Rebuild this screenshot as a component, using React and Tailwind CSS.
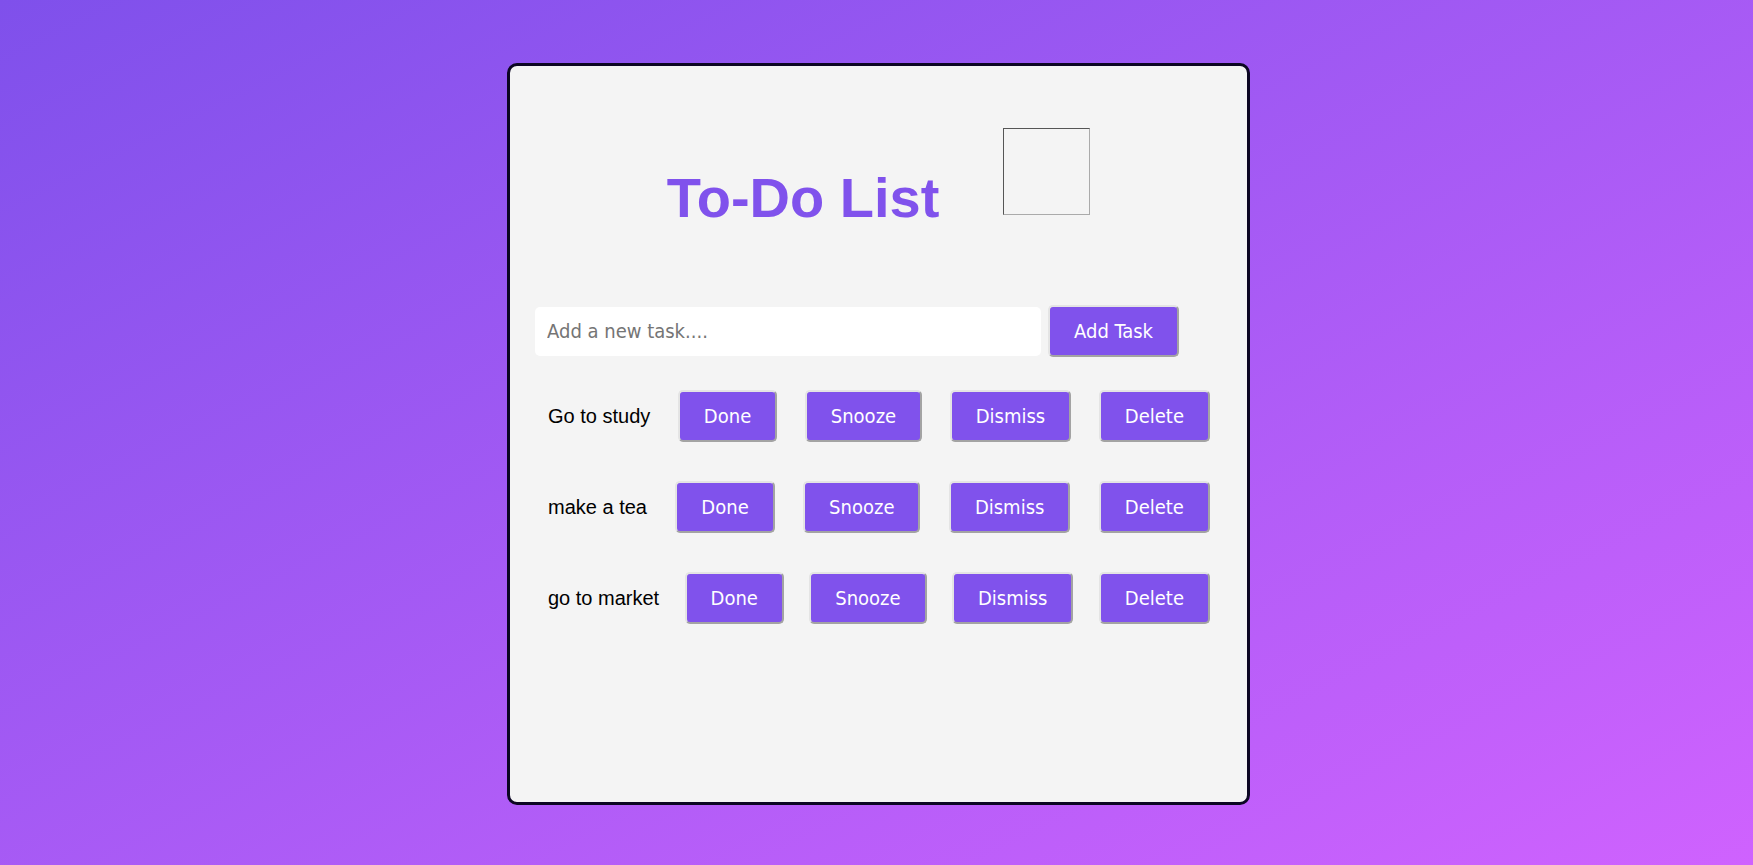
import React, { useState } from 'react';

const initialTasks = ['Go to study', 'make a tea', 'go to market'];

const btn =
    "bg-[#8052ec] text-white text-[20px] leading-[24px] px-6 py-3 rounded-[5px] border-2 border-t-[#e4e4e4] border-l-[#e4e4e4] border-r-[#a3a3a3] border-b-[#a3a3a3] font-['DejaVu_Sans',sans-serif] [font-stretch:condensed]";

const TaskRow = ({ text }) => (
    <li className="flex items-center justify-between w-[662px] ml-[38px]">
        <span className="text-[20px] text-black font-['Liberation_Sans',Arial,sans-serif]">{text}</span>
        <button className={btn}>Done</button>
        <button className={btn}>Snooze</button>
        <button className={btn}>Dismiss</button>
        <button className={btn}>Delete</button>
    </li>
);

export default function App() {
    const [tasks] = useState(initialTasks);

    return (
        <div className="min-h-screen w-full flex items-center justify-center bg-linear-to-br from-[#7f50eb] to-[#cf62fe]">
            <div className="ml-[4px] mt-[3px] w-[743px] h-[742px] bg-[#f4f4f4] border-[3px] border-[#0c0623] rounded-[10px] flex flex-col">
                {/* Header */}
                <div className="flex justify-center items-start gap-[64px] pt-[62px]">
                    <h1 className="mt-[38px] text-[56px] leading-[64px] font-bold text-[#8052ec] font-['Liberation_Sans',Arial,sans-serif]">
                        To-Do List
                    </h1>
                    <div className="w-[87px] h-[87px] border border-t-[#555555] border-l-[#555555] border-r-[#aaaaaa] border-b-[#aaaaaa]" />
                </div>

                {/* Input */}
                <div className="flex items-center gap-[7px] mt-[75px] ml-[25px]">
                    <input
                        type="text"
                        placeholder="Add a new task...."
                        className="w-[506px] h-[49px] bg-white rounded-[5px] pl-3 text-[20px] outline-none placeholder:text-[#757575] font-['DejaVu_Sans',sans-serif] [font-stretch:condensed]"
                    />
                    <button className={btn}>Add Task</button>
                </div>

                {/* Tasks */}
                <ul className="flex flex-col gap-[39px] mt-[33px]">
                    {tasks.map((t, i) => (
                        <TaskRow key={i} text={t} />
                    ))}
                </ul>
            </div>
        </div>
    );
}
